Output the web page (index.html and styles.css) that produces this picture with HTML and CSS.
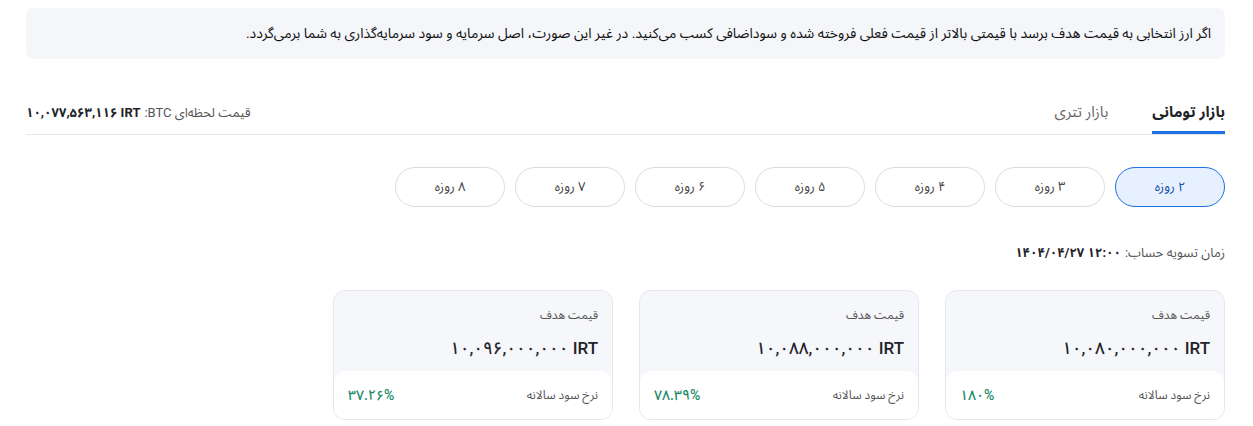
FILE: index.html
```html
<!DOCTYPE html>
<html lang="fa" dir="rtl">
<head>
<meta charset="utf-8">
<link rel="stylesheet" href="styles.css">
</head>
<body>
<div class="page">
  <div class="notice"><p class="notice-text">اگر ارز انتخابی به قیمت هدف برسد با قیمتی بالاتر از قیمت فعلی فروخته شده و سوداضافی کسب می&zwnj;کنید. در غیر این صورت، اصل سرمایه و سود سرمایه&zwnj;گذاری به شما برمی&zwnj;گردد.</p></div>

  <div class="tabs-row">
    <div class="tabs">
      <div class="tab active">بازار تومانی</div>
      <div class="tab">بازار تتری</div>
    </div>
    <div class="live-price">
      <span class="lp-label">قیمت لحظه&zwnj;ای BTC:</span>
      <span class="lp-value" dir="ltr">۱۰,۰۷۷,۵۶۳,۱۱۶ IRT</span>
    </div>
  </div>

  <div class="pills">
    <div class="pill active">۲ روزه</div>
    <div class="pill">۳ روزه</div>
    <div class="pill">۴ روزه</div>
    <div class="pill">۵ روزه</div>
    <div class="pill">۶ روزه</div>
    <div class="pill">۷ روزه</div>
    <div class="pill">۸ روزه</div>
  </div>

  <div class="settle">
    <span class="settle-label">زمان تسویه حساب:</span>
    <span class="settle-value" dir="ltr">۱۴۰۴/۰۴/۲۷ ۱۲:۰۰</span>
  </div>

  <div class="cards">
    <div class="card">
      <div class="card-top">
        <div class="card-label">قیمت هدف</div>
        <div class="card-value" dir="ltr">۱۰,۰۸۰,۰۰۰,۰۰۰ IRT</div>
      </div>
      <div class="card-bottom">
        <span class="rate-label">نرخ سود سالانه</span>
        <span class="rate">۱۸۰%</span>
      </div>
    </div>
    <div class="card">
      <div class="card-top">
        <div class="card-label">قیمت هدف</div>
        <div class="card-value" dir="ltr">۱۰,۰۸۸,۰۰۰,۰۰۰ IRT</div>
      </div>
      <div class="card-bottom">
        <span class="rate-label">نرخ سود سالانه</span>
        <span class="rate">۷۸.۳۹%</span>
      </div>
    </div>
    <div class="card">
      <div class="card-top">
        <div class="card-label">قیمت هدف</div>
        <div class="card-value" dir="ltr">۱۰,۰۹۶,۰۰۰,۰۰۰ IRT</div>
      </div>
      <div class="card-bottom">
        <span class="rate-label">نرخ سود سالانه</span>
        <span class="rate">۳۷.۲۶%</span>
      </div>
    </div>
  </div>
</div>
</body>
</html>
```

FILE: styles.css
```css
* { box-sizing: border-box; }
html, body { margin: 0; padding: 0; background: #fff; }
body {
  font-family: Roboto, "Noto Sans Arabic", "Vazirmatn", "DejaVu Sans", sans-serif;
  color: #1f2328;
  direction: rtl;
  line-height: 1.4;
}
.page {
  padding: 8px 28px 0 26px;
}
.notice {
  background: #f5f6fa;
  border-radius: 8px;
  height: 51px;
  padding: 15px 14px 0;
}
.notice-text {
  margin: 0;
  font-size: 14px;
  line-height: 20px;
  font-weight: 400;
  color: #111;
  text-align: right;
  white-space: nowrap;
}
.tabs-row {
  margin-top: 37px;
  display: flex;
  justify-content: space-between;
  align-items: stretch;
  border-bottom: 1px solid #e6e6e6;
  height: 39px;
}
.tabs { display: flex; gap: 44px; }
.tab {
  font-size: 15px;
  color: #666;
  display: flex;
  align-items: center;
  padding-bottom: 2px;
  border-bottom: 3px solid transparent;
}
.tab.active {
  color: #1f2328;
  font-weight: 700;
  border-bottom-color: #1f6fe5;
}
.live-price {
  display: flex;
  align-items: center;
  gap: 4px;
  font-size: 13px;
  padding-bottom: 4px;
}
.lp-label { color: #555; }
.lp-value { font-weight: 700; color: #1f2328; }
.pills {
  margin-top: 32px;
  display: flex;
  gap: 10px;
}
.pill {
  width: 110px;
  height: 40px;
  border: 1px solid #dcdcdc;
  border-radius: 20px;
  display: flex;
  align-items: center;
  justify-content: center;
  font-size: 13px;
  color: #444;
  background: #fff;
}
.pill.active {
  background: #e6f0ff;
  border-color: #1f6fe5;
  color: #1a4fa8;
}
.settle {
  margin-top: 36px;
  display: flex;
  gap: 4px;
  font-size: 13px;
  line-height: 20px;
}
.settle-label { color: #555; }
.settle-value { font-weight: 700; color: #1f2328; }
.cards {
  margin-top: 27px;
  display: flex;
  gap: 26px;
}
.card {
  width: 280px;
  height: 130px;
  border: 1px solid #e5e7ec;
  border-radius: 12px;
  background: #f6f7fb;
  display: flex;
  flex-direction: column;
  overflow: hidden;
}
.card-top {
  flex: 1;
  padding: 15px 14px 0;
}
.card-label { font-size: 12px; color: #555; line-height: 18px; }
.card-value {
  margin-top: 12px;
  font-size: 17px;
  line-height: 24px;
  font-weight: 500;
  color: #1f2328;
  text-align: right;
}
.card-bottom {
  height: 48px;
  background: #fff;
  border-radius: 12px 12px 0 0;
  display: flex;
  justify-content: space-between;
  align-items: center;
  padding: 0 14px;
  line-height: 20px;
}
.rate-label { font-size: 12px; color: #555; }
.rate { font-size: 14px; color: #1c8a6a; font-weight: 500; }
```
